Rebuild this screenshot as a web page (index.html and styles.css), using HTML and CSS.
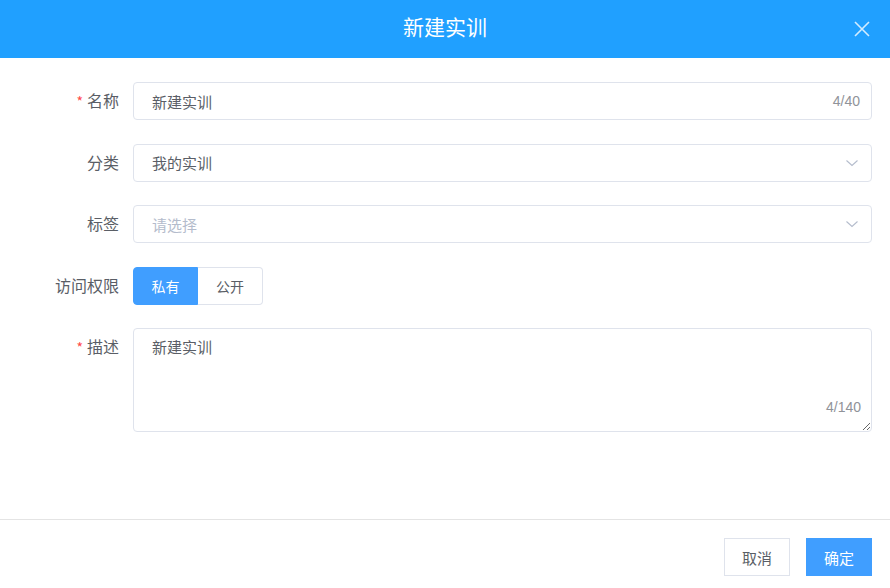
FILE: index.html
```html
<!DOCTYPE html>
<html lang="zh">
<head>
<meta charset="utf-8">
<title>新建实训</title>
<link rel="stylesheet" href="styles.css">
</head>
<body>
<div class="dialog">
  <header class="dlg-header">
    <span></span>
    <h1 class="dlg-title">新建实训</h1>
    <button class="dlg-close" aria-label="关闭">
      <svg width="18" height="18" viewBox="0 0 18 18"><path d="M2 2 L16 16 M16 2 L2 16" stroke="currentColor" stroke-width="1.6" fill="none"/></svg>
    </button>
  </header>
  <form class="dlg-body">
    <div class="row">
      <label class="lbl"><span class="req">*</span>名称</label>
      <div class="ctl field">
        <input class="inp" value="新建实训">
        <span class="count">4/40</span>
      </div>
    </div>
    <div class="row">
      <label class="lbl">分类</label>
      <div class="ctl field">
        <input class="inp" value="我的实训" readonly>
        <svg class="chev" width="14" height="14" viewBox="0 0 14 14"><path d="M1.5 4.5 L7 9.5 L12.5 4.5" stroke="currentColor" stroke-width="1.1" fill="none"/></svg>
      </div>
    </div>
    <div class="row">
      <label class="lbl">标签</label>
      <div class="ctl field">
        <input class="inp" placeholder="请选择" readonly>
        <svg class="chev" width="14" height="14" viewBox="0 0 14 14"><path d="M1.5 4.5 L7 9.5 L12.5 4.5" stroke="currentColor" stroke-width="1.1" fill="none"/></svg>
      </div>
    </div>
    <div class="row">
      <label class="lbl">访问权限</label>
      <div class="ctl radios">
        <span class="rb active">私有</span>
        <span class="rb">公开</span>
      </div>
    </div>
    <div class="row">
      <label class="lbl"><span class="req">*</span>描述</label>
      <div class="ctl field">
        <textarea class="ta">新建实训</textarea>
        <span class="count ta-count">4/140</span>
      </div>
    </div>
  </form>
  <footer class="dlg-footer">
    <button class="btn">取消</button>
    <button class="btn primary">确定</button>
  </footer>
</div>
</body>
</html>
```
FILE: styles.css
```css
* { box-sizing: border-box; }
html, body { margin: 0; padding: 0; background: #fff; }
body {
  width: 890px;
  height: 588px;
  font-family: "Noto Sans CJK SC", "Noto Sans", sans-serif;
  color: #5a5e66;
}
.dialog { display: flex; flex-direction: column; height: 588px; }
.dlg-header {
  height: 58px;
  background: #20a0ff;
  display: grid;
  grid-template-columns: 1fr auto 1fr;
  align-items: center;
}
.dlg-title {
  margin: 0;
  font-size: 21px;
  font-weight: 400;
  color: #fff;
  line-height: 1;
  position: relative;
  top: -3px;
}
.dlg-close {
  justify-self: end;
  margin-right: 19px;
  border: 0;
  background: none;
  padding: 0;
  width: 18px;
  height: 18px;
  color: rgba(255,255,255,0.8);
  display: flex;
}
.dlg-body {
  flex: 1;
  padding: 24px 18px 0 0;
  margin: 0;
}
.row { display: flex; align-items: flex-start; margin-bottom: 23.5px; }
.lbl {
  width: 133px;
  padding-right: 14px;
  text-align: right;
  font-size: 16px;
  line-height: 37px;
  height: 38px;
  color: #5a5e66;
  flex-shrink: 0;
}
.req { color: #ff4949; margin-right: 4px; font-size: 14px; }
.ctl { flex: 1; position: relative; }
.field { display: flex; align-items: center; }
.inp {
  width: 100%;
  height: 38px;
  border: 1px solid #dfe3ec;
  border-radius: 4px;
  padding: 0 50px 0 18px;
  font: inherit;
  font-size: 15px;
  color: #5a5e66;
  outline: none;
  background: #fff;
}
.inp::placeholder { color: #b4bccc; }
.count {
  position: absolute;
  right: 12px;
  top: 50%;
  transform: translateY(-50%);
  font-family: "Liberation Sans", Arial, sans-serif;
  font-size: 14px;
  color: #909399;
}
.chev { position: absolute; right: 13px; top: 12px; color: #b4bccc; }
.radios { display: flex; }
.rb {
  width: 65px;
  height: 38px;
  display: flex;
  align-items: center;
  justify-content: center;
  font-size: 14px;
  border: 1px solid #dfe3ec;
  color: #5a5e66;
  background: #fff;
}
.rb.active {
  background: #409eff;
  border-color: #409eff;
  color: #fff;
  border-radius: 4px 0 0 4px;
}
.rb + .rb { border-left: 0; border-radius: 0 4px 4px 0; }
.ta {
  width: 100%;
  height: 104px;
  border: 1px solid #dfe3ec;
  border-radius: 4px;
  padding: 7px 18px;
  font: inherit;
  font-size: 15px;
  line-height: 22px;
  color: #5a5e66;
  outline: none;
  resize: vertical;
}
.ta-count { top: auto; bottom: 17px; transform: none; right: 11px; }
.dlg-footer {
  border-top: 1px solid #e4e4e4;
  height: 69px;
  display: flex;
  justify-content: flex-end;
  align-items: flex-start;
  gap: 16px;
  padding: 18px 18px 0 0;
}
.btn {
  width: 66px;
  height: 38px;
  border: 1px solid #dfe3ec;
  background: #fff;
  font: inherit;
  font-size: 15px;
  color: #5a5e66;
  padding: 0;
}
.btn.primary { background: #409eff; border-color: #409eff; color: #fff; }
```
